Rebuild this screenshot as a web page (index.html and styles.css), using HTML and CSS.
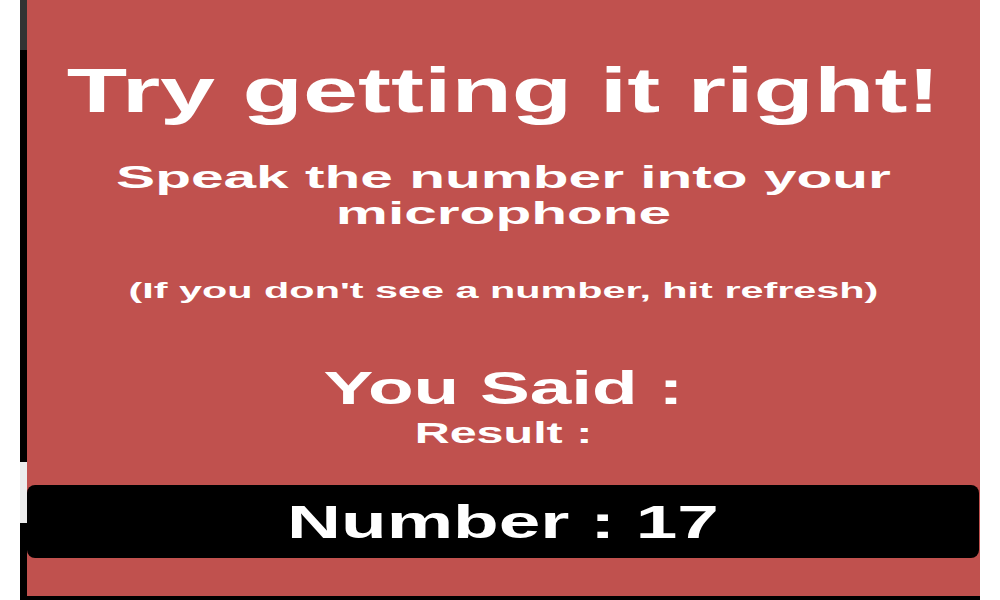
FILE: index.html
```html
<!DOCTYPE html>
<html lang="en">
<head>
<meta charset="utf-8">
<title>Try getting it right!</title>
<link rel="stylesheet" href="styles.css">
</head>
<body>
<div class="frame">
  <div class="strip">
    <div class="strip-top"></div>
    <div class="strip-mid"></div>
    <div class="strip-thumb"></div>
  </div>
  <main class="panel">
    <h1 class="title">Try getting it right!</h1>
    <p class="prompt">Speak the number into your<br>microphone</p>
    <p class="hint">(If you don't see a number, hit refresh)</p>
    <h2 class="said">You Said :</h2>
    <p class="result">Result :</p>
    <div class="bar"><div class="number">Number : 17</div></div>
  </main>
</div>
</body>
</html>
```
FILE: styles.css
```css
html, body {
  margin: 0;
  padding: 0;
  background: #ffffff;
}
body {
  width: 1000px;
  height: 600px;
  overflow: hidden;
  font-family: "Liberation Sans", Arial, sans-serif;
}
.frame {
  margin-left: 20px;
  width: 960px;
  height: 600px;
  background: #000000;
  display: flex;
  align-items: flex-start;
}
.strip {
  width: 7px;
  height: 600px;
  display: flex;
  flex-direction: column;
}
.strip-top {
  height: 50px;
  background: #333333;
}
.strip-mid {
  height: 412px;
  background: #000000;
}
.strip-thumb {
  height: 61px;
  background: #ececec;
}
.panel {
  flex: 1;
  height: 596px;
  background: #c0514e;
  color: #ffffff;
  font-weight: bold;
  text-align: center;
  padding-top: 55px;
  box-sizing: border-box;
  overflow: hidden;
  display: flex;
  flex-direction: column;
}
.panel h1, .panel h2, .panel p {
  margin: 0;
  font-weight: bold;
}
.title {
  font-size: 63px;
  line-height: 70px;
  transform: scaleX(1.57);
}
.prompt {
  margin-top: 35px !important;
  font-size: 31px;
  line-height: 36px;
  transform: scaleX(1.89);
}
.hint {
  margin-top: 46px !important;
  font-size: 22px;
  line-height: 26px;
  transform: scaleX(1.88);
}
.said {
  margin-top: 57px !important;
  font-size: 47px;
  line-height: 54px;
  transform: scaleX(1.59);
}
.result {
  margin-top: 2px !important;
  font-size: 29px;
  line-height: 32px;
  transform: scaleX(1.67);
}
.bar {
  margin-top: 36px;
  margin-right: 1px;
  height: 73px;
  background: #000000;
  border-radius: 8px;
}
.number {
  font-size: 47px;
  line-height: 73px;
  transform: scaleX(1.59);
}
```
